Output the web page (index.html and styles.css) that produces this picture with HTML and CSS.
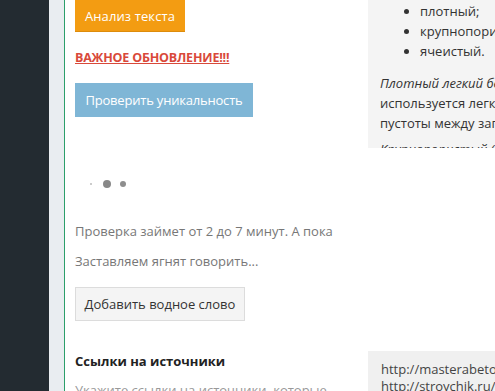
FILE: index.html
```html
<!DOCTYPE html>
<html lang="ru">
<head>
<meta charset="utf-8">
<link rel="stylesheet" href="styles.css">
</head>
<body>
<div class="layout">
  <aside class="sidebar"></aside>
  <div class="stripe"></div>
  <main class="main">
    <section class="top">
      <div class="actions">
        <button class="btn btn-orange">Анализ текста</button>
        <a class="important" href="#">ВАЖНОЕ ОБНОВЛЕНИЕ!!!</a>
        <button class="btn btn-blue">Проверить уникальность</button>
      </div>
      <div class="preview">
        <ul class="preview-list">
          <li>плотный;</li>
          <li>крупнопористый;</li>
          <li>ячеистый.</li>
        </ul>
        <p class="preview-text"><em>Плотный легкий бетон</em> — в нем<br>используется легкий заполнитель, а<br>пустоты между заполнителем</p>
        <p class="preview-text preview-cut"><em>Крупнопористый (беспесчаный)</em></p>
      </div>
    </section>
    <div class="loader">
      <span class="dot dot-s"></span>
      <span class="dot dot-l"></span>
      <span class="dot dot-m"></span>
    </div>
    <p class="note">Проверка займет от 2 до 7 минут. А пока</p>
    <p class="note note-2">Заставляем ягнят говорить...</p>
    <button class="btn btn-light">Добавить водное слово</button>
    <section class="sources">
      <div class="sources-info">
        <h3 class="sources-title">Ссылки на источники</h3>
        <p class="sources-desc">Укажите ссылки на источники, которые</p>
      </div>
      <div class="sources-box">
        <div>http://masterabeton.ru/</div>
        <div>http://stroychik.ru/</div>
      </div>
    </section>
  </main>
</div>
</body>
</html>
```

FILE: styles.css
```css
* { box-sizing: border-box; }
html, body {
  margin: 0;
  padding: 0;
  height: 100%;
  overflow: hidden;
  background: #fff;
  font-family: "Open Sans", "Noto Sans", sans-serif;
  font-size: 13px;
}
.layout {
  display: flex;
  height: 391px;
  overflow: hidden;
}
.sidebar {
  width: 49px;
  flex: none;
  background: #232b31;
}
.stripe {
  width: 15px;
  flex: none;
  background: #e9edf1;
}
.main {
  flex: 1;
  min-width: 0;
  border-left: 1px solid #2c9f6b;
  padding-left: 10px;
  overflow: hidden;
}
.top {
  display: grid;
  grid-template-columns: 293px 200px;
}
.actions {
  display: flex;
  flex-direction: column;
  align-items: flex-start;
}
.btn {
  font-family: "Open Sans", "Noto Sans", sans-serif;
  font-size: 13px;
  border: 0;
  border-radius: 0;
  padding: 0;
  white-space: nowrap;
  cursor: pointer;
}
.btn-orange {
  height: 32px;
  width: 110px;
  background: #f39c12;
  color: #fff;
  border-bottom: 1px solid #dd8c0c;
  padding-top: 1px;
  letter-spacing: 0.1px;
}
.important {
  margin-top: 18px;
  color: #d9493a;
  font-weight: 700;
  font-size: 12.5px;
  letter-spacing: -0.2px;
  line-height: 16px;
  text-decoration: underline;
}
.btn-blue {
  margin-top: 17px;
  height: 34px;
  width: 178px;
  background: #7fb6d6;
  color: #fff;
  letter-spacing: -0.2px;
}
.preview {
  height: 148px;
  overflow: hidden;
  background: #f4f4f4;
  padding: 1px 12px 0 12px;
  color: #333;
  white-space: nowrap;
  line-height: 20px;
}
.preview-list {
  margin: 0;
  padding-left: 40px;
}
.preview-text {
  margin: 12px 0 0 0;
}
.preview-cut {
  margin-top: 6px;
}
.loader {
  display: flex;
  align-items: center;
  height: 8px;
  margin: 32px 0 0 15px;
}
.dot {
  display: block;
  border-radius: 50%;
}
.dot-s { width: 2px; height: 2px; background: #bbb; }
.dot-l { width: 8px; height: 8px; background: #888; margin-left: 11px; }
.dot-m { width: 6px; height: 6px; background: #8e8e8e; margin-left: 9px; }
.note {
  margin: 34px 0 0 0;
  color: #777;
  line-height: 18px;
}
.note-2 {
  margin-top: 12px;
}
.btn-light {
  margin-top: 17px;
  height: 34px;
  width: 170px;
  background: #f4f4f4;
  border: 1px solid #dcdcdc;
  color: #333;
}
.sources {
  display: grid;
  grid-template-columns: 293px 200px;
  margin-top: 30px;
}
.sources-title {
  margin: 0;
  padding-top: 1px;
  font-size: 13px;
  font-weight: 700;
  color: #222;
  line-height: 18px;
}
.sources-desc {
  margin: 11px 0 0 0;
  color: #999;
  line-height: 18px;
  white-space: nowrap;
}
.sources-box {
  background: #f0f0f0;
  padding: 10px 13px;
  color: #444;
  line-height: 17px;
  white-space: nowrap;
  overflow: hidden;
  height: 60px;
}
```
